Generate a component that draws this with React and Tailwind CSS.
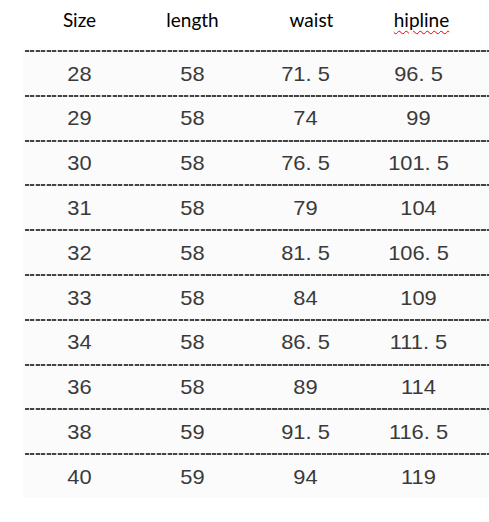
import React from "react";

const header = ["Size", "length", "waist", "hipline"];
const headerPad = ["", "", "pl-[12px]", "pl-[6px]"];
const rows = [
  ["28", "58", "71. 5", "96. 5"],
  ["29", "58", "74", "99"],
  ["30", "58", "76. 5", "101. 5"],
  ["31", "58", "79", "104"],
  ["32", "58", "81. 5", "106. 5"],
  ["33", "58", "84", "109"],
  ["34", "58", "86. 5", "111. 5"],
  ["36", "58", "89", "114"],
  ["38", "59", "91. 5", "116. 5"],
  ["40", "59", "94", "119"],
];

function Dashes() {
  return (
    <div className="ml-[2px] h-[2px] bg-[repeating-linear-gradient(90deg,#444_0_4px,#d0d0d0_4px_5.5px)]" />
  );
}

export default function App() {
  return (
    <div className="w-[489px] h-[522px] bg-white overflow-hidden">
      <div className="grid grid-cols-[113px_113px_113px_113px] pl-[23px] h-[50px] items-center text-[19px] text-black font-['Lato','Liberation_Sans',sans-serif] pb-[10px]">
        {header.map((h, i) => (
          <div key={i} className={`text-center ${headerPad[i]}`}>
            {i === 3 ? (
              <span className="underline decoration-wavy decoration-red-600 decoration-1 underline-offset-[3px]">
                {h}
              </span>
            ) : (
              h
            )}
          </div>
        ))}
      </div>
      <div className="ml-[23px] bg-[#fbfbfb]">
        {rows.map((r, i) => (
          <div key={i}>
            <Dashes />
            <div className="grid grid-cols-[113px_113px_113px_113px] h-[42.8px] items-center text-[21px] text-[#3a3a3a] font-['Liberation_Sans',sans-serif]">
              {r.map((c, j) => (
                <div key={j} className="text-center whitespace-pre scale-x-[1.04]">
                  {c}
                </div>
              ))}
            </div>
          </div>
        ))}
      </div>
    </div>
  );
}
